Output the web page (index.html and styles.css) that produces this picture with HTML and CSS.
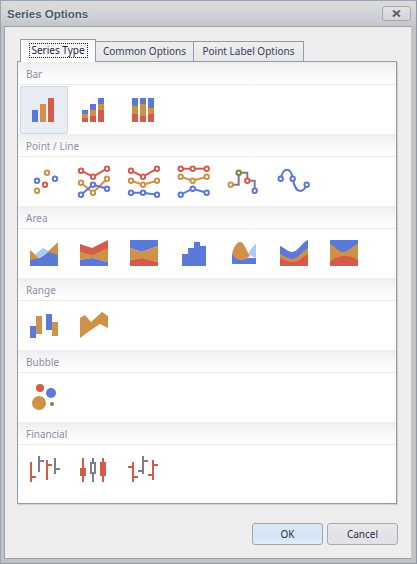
FILE: index.html
```html
<!DOCTYPE html>
<html lang="en">
<head>
<meta charset="utf-8">
<title>Series Options</title>
<link rel="stylesheet" href="styles.css">
</head>
<body>
<div class="window">
  <div class="titlebar">
    <span class="title">Series Options</span>
    <button class="close" aria-label="Close"><svg width="9" height="7" viewBox="0 0 9 7"><path class="close-x" d="M1 0.5 L8 6.5 M8 0.5 L1 6.5"/></svg></button>
  </div>
  <div class="client">
    <div class="tabs">
      <div class="tab active"><span class="focus">Series Type</span></div>
      <div class="tab common">Common Options</div>
      <div class="tab label">Point Label Options</div>
    </div>
    <div class="panel">
      <section class="group">
        <div class="group-head">Bar</div>
        <div class="row">
          <div class="cell selected"><svg viewBox="0 0 48 48"><rect class="blue" x="12" y="24" width="6" height="12"/><rect class="orange" x="20" y="18" width="6" height="18"/><rect class="red" x="28" y="12" width="6" height="24"/></svg></div>
          <div class="cell"><svg viewBox="0 0 48 48"><rect class="blue" x="12" y="24" width="6" height="4"/><rect class="orange" x="12" y="28" width="6" height="4"/><rect class="red" x="12" y="32" width="6" height="4"/><rect class="blue" x="20" y="18" width="6" height="6"/><rect class="orange" x="20" y="24" width="6" height="6"/><rect class="red" x="20" y="30" width="6" height="6"/><rect class="blue" x="28" y="12" width="6" height="6"/><rect class="orange" x="28" y="18" width="6" height="6"/><rect class="red" x="28" y="24" width="6" height="12"/></svg></div>
          <div class="cell"><svg viewBox="0 0 48 48"><rect class="blue" x="12" y="12" width="6" height="8"/><rect class="orange" x="12" y="20" width="6" height="8"/><rect class="red" x="12" y="28" width="6" height="8"/><rect class="blue" x="20" y="12" width="6" height="6"/><rect class="orange" x="20" y="18" width="6" height="12"/><rect class="red" x="20" y="30" width="6" height="6"/><rect class="blue" x="28" y="12" width="6" height="10"/><rect class="orange" x="28" y="22" width="6" height="6"/><rect class="red" x="28" y="28" width="6" height="8"/></svg></div>
        </div>
      </section>
      <section class="group">
        <div class="group-head">Point / Line</div>
        <div class="row">
          <div class="cell"><svg viewBox="0 0 48 48"><circle class="pt-blue" cx="17" cy="22.7" r="2.2"/><circle class="pt-orange" cx="27" cy="14.7" r="2.2"/><circle class="pt-blue" cx="35" cy="20.7" r="2.2"/><circle class="pt-red" cx="25" cy="26.7" r="2.2"/><circle class="pt-orange" cx="17" cy="32.7" r="2.2"/></svg></div>
          <div class="cell"><svg viewBox="0 0 48 48"><polyline class="ln-red" points="11,12.7 23,18.7 37,10.7"/><polyline class="ln-orange" points="11,24.7 23,34.7 37,20.7"/><polyline class="ln-blue" points="11,36.7 23,26.7 37,30.7"/><circle class="pt-red" cx="11" cy="12.7" r="2.2"/><circle class="pt-red" cx="23" cy="18.7" r="2.2"/><circle class="pt-red" cx="37" cy="10.7" r="2.2"/><circle class="pt-orange" cx="11" cy="24.7" r="2.2"/><circle class="pt-orange" cx="23" cy="34.7" r="2.2"/><circle class="pt-orange" cx="37" cy="20.7" r="2.2"/><circle class="pt-blue" cx="11" cy="36.7" r="2.2"/><circle class="pt-blue" cx="23" cy="26.7" r="2.2"/><circle class="pt-blue" cx="37" cy="30.7" r="2.2"/></svg></div>
          <div class="cell"><svg viewBox="0 0 48 48"><polyline class="ln-red" points="11,12.7 23,18.7 37,10.7"/><polyline class="ln-orange" points="11,22.7 23,26.7 37,22.7"/><polyline class="ln-blue" points="11,34.7 23,34.7 37,36.7"/><circle class="pt-red" cx="11" cy="12.7" r="2.2"/><circle class="pt-red" cx="23" cy="18.7" r="2.2"/><circle class="pt-red" cx="37" cy="10.7" r="2.2"/><circle class="pt-orange" cx="11" cy="22.7" r="2.2"/><circle class="pt-orange" cx="23" cy="26.7" r="2.2"/><circle class="pt-orange" cx="37" cy="22.7" r="2.2"/><circle class="pt-blue" cx="11" cy="34.7" r="2.2"/><circle class="pt-blue" cx="23" cy="34.7" r="2.2"/><circle class="pt-blue" cx="37" cy="36.7" r="2.2"/></svg></div>
          <div class="cell"><svg viewBox="0 0 48 48"><polyline class="ln-red" points="10.7,10.7 22.7,10.7 36.7,10.7"/><polyline class="ln-orange" points="10.7,18.7 22.7,22.7 36.7,18.7"/><polyline class="ln-blue" points="10.7,36.7 22.7,30.7 36.7,34.7"/><circle class="pt-red" cx="10.7" cy="10.7" r="2.2"/><circle class="pt-red" cx="22.7" cy="10.7" r="2.2"/><circle class="pt-red" cx="36.7" cy="10.7" r="2.2"/><circle class="pt-orange" cx="10.7" cy="18.7" r="2.2"/><circle class="pt-orange" cx="22.7" cy="22.7" r="2.2"/><circle class="pt-orange" cx="36.7" cy="18.7" r="2.2"/><circle class="pt-blue" cx="10.7" cy="36.7" r="2.2"/><circle class="pt-blue" cx="22.7" cy="30.7" r="2.2"/><circle class="pt-blue" cx="36.7" cy="34.7" r="2.2"/></svg></div>
          <div class="cell"><svg viewBox="0 0 48 48"><polyline class="ln-grey" points="10.7,26.7 18.7,26.7 18.7,14.7 27.3,14.7 27.3,22.7 34.7,22.7 34.7,32.7"/><circle class="pt-orange" cx="10.7" cy="26.7" r="2.2"/><circle class="pt-green" cx="18.7" cy="14.7" r="2.2"/><circle class="pt-red" cx="27.3" cy="22.7" r="2.2"/><circle class="pt-blue" cx="34.7" cy="32.7" r="2.2"/></svg></div>
          <div class="cell"><svg viewBox="0 0 48 48"><path class="ln-blue" d="M10.7 20.7 C12 14.5 14.5 11.7 17 11.7 C20 11.7 22 16 22.7 20.7 C24 28 27 33 30 33 C33 33 35.5 30 36.7 26.7"/><circle class="pt-blue" cx="10.7" cy="20.7" r="2.2"/><circle class="pt-blue" cx="22.7" cy="20.7" r="2.2"/><circle class="pt-blue" cx="36.7" cy="26.7" r="2.2"/></svg></div>
        </div>
      </section>
      <section class="group">
        <div class="group-head">Area</div>
        <div class="row">
          <div class="cell"><svg viewBox="0 0 48 48"><polygon class="orange" points="10,20 20,29 38,12 38,36 10,36"/><polygon class="sky" points="14.5,25 23,18 29,21 20,28"/><polygon class="blue" points="10,30 20,28 29,22 38,25 38,36 10,36"/></svg></div>
          <div class="cell"><svg viewBox="0 0 48 48"><polygon class="red" points="10,14 22,18 38,10 38,20 22,26 10,22"/><polygon class="orange" points="10,22 22,25 38,18 38,32 22,28 10,30"/><polygon class="blue" points="10,30 22,28 38,32 38,36 10,36"/></svg></div>
          <div class="cell"><svg viewBox="0 0 48 48"><polygon class="blue" points="10,10 38,10 38,16 22,22 10,18"/><polygon class="orange" points="10,18 22,22 38,16 38,32 22,28 10,30"/><polygon class="red" points="10,30 22,28 38,32 38,36 10,36"/></svg></div>
          <div class="cell"><svg viewBox="0 0 48 48"><path class="blue" d="M12 36 V24 H18 V18 H24 V12 H30 V16 H36 V36 Z"/></svg></div>
          <div class="cell"><svg viewBox="0 0 48 48"><path class="sky" d="M28 24 C30 20 33 16 36 14 V28 Z"/><path class="blue" d="M12 34 V24 L20 30 L28 28 L36 28 V34 Z"/><path class="orange" d="M12 24 C14 16 17 12 20 12 C24 12 26 20 30 26 C26 29 23 30 20 30 C17 30 14 27 12 24 Z"/></svg></div>
          <div class="cell"><svg viewBox="0 0 48 48"><path class="blue" d="M10 16 C15 18 18 22 22 22 C28 22 32 12 38 10 V36 H10 Z"/><path class="orange" d="M10 24 C15 26 18 29 22 29 C28 29 32 21 38 18 V36 H10 Z"/><path class="red" d="M10 28 C15 30 18 32 23 32 C29 32 33 27 38 24 V36 H10 Z"/></svg></div>
          <div class="cell"><svg viewBox="0 0 48 48"><rect class="blue" x="10" y="10" width="28" height="26"/><path class="orange" d="M10 14 C15 16 18 22 23 22 C28 22 32 16 38 14 V36 H10 Z"/><path class="red" d="M10 32 C14 28 19 26 24 26 C30 26 34 28 38 30 V36 H10 Z"/></svg></div>
        </div>
      </section>
      <section class="group">
        <div class="group-head">Range</div>
        <div class="row">
          <div class="cell"><svg viewBox="0 0 48 48"><rect class="blue" x="10" y="24" width="6" height="12"/><rect class="orange" x="16" y="14" width="6" height="18"/><rect class="blue" x="26" y="12" width="6" height="16"/><rect class="orange" x="32" y="20" width="6" height="14"/></svg></div>
          <div class="cell"><svg viewBox="0 0 48 48"><polygon class="orange" points="10,16 15,13 21,20 32,10 38,14 38,26 30,22 18,30 10,36"/></svg></div>
        </div>
      </section>
      <section class="group">
        <div class="group-head">Bubble</div>
        <div class="row">
          <div class="cell"><svg viewBox="0 0 48 48"><circle class="red" cx="20" cy="14" r="4"/><circle class="blue" cx="31" cy="19" r="5"/><circle class="orange" cx="19" cy="29" r="7"/><circle class="green" cx="32" cy="30" r="2"/></svg></div>
        </div>
      </section>
      <section class="group">
        <div class="group-head">Financial</div>
        <div class="row">
          <div class="cell"><svg viewBox="0 0 48 48"><path class="red" d="M10 16 h2 v14 h4 v2 h-4 v4 h-2 Z"/><path class="grey" d="M18 10 h2 v4 h4 v2 h-4 v10 h-2 Z"/><path class="red" d="M26 14 h2 v4 h4 v2 h-4 v14 h-2 Z"/><path class="grey" d="M34 12 h2 v10 h4 v2 h-4 v4 h-2 Z"/></svg></div>
          <div class="cell"><svg viewBox="0 0 48 48"><rect class="red" x="12" y="12" width="2" height="24"/><rect class="red" x="10" y="22" width="6" height="8"/><rect class="grey" x="22" y="12" width="2" height="24"/><rect class="grey" x="20" y="16" width="6" height="12"/><rect class="paper" x="22" y="18" width="2" height="8"/><rect class="red" x="32" y="12" width="2" height="24"/><rect class="red" x="30" y="16" width="6" height="14"/></svg></div>
          <div class="cell"><svg viewBox="0 0 48 48"><path class="red" d="M12 16 h2 v14 h4 v2 h-4 v4 h-2 V22 H8 v-2 h4 Z"/><path class="grey" d="M22 10 h2 v4 h4 v2 h-4 v12 h-2 v-2 h-4 v-2 h4 Z"/><path class="red" d="M32 14 h2 v4 h4 v2 h-4 v14 h-2 v-4 h-4 v-2 h4 Z"/></svg></div>
        </div>
      </section>
    </div>
    <div class="footer">
      <button class="btn primary">OK</button>
      <button class="btn">Cancel</button>
    </div>
  </div>
</div>
</body>
</html>
```
FILE: styles.css
```css
* { box-sizing: border-box; }
html, body { margin: 0; padding: 0; }
body {
  width: 417px;
  height: 564px;
  overflow: hidden;
  font-family: "Noto Sans", "Liberation Sans", Arial, sans-serif;
  font-size: 10px;
  color: #3c3c5c;
}
.window {
  width: 417px;
  height: 564px;
  display: flex;
  flex-direction: column;
  background: #bfc3c8;
  border: 1px solid #9aa6b6;
  border-right-color: #8f9aa8;
  border-bottom-color: #8f9aa8;
}
.titlebar {
  height: 25px;
  flex: none;
  display: flex;
  align-items: flex-start;
  justify-content: space-between;
  padding: 5px 5px 0 6px;
  background: linear-gradient(#dcdbdb 0, #d6d6d6 40%, #d0d1d6 55%, #c3c6cb 100%);
}
.title {
  font-family: "Liberation Sans", Arial, sans-serif;
  font-size: 11.5px;
  font-weight: bold;
  line-height: 16px;
  color: #4a5a68;
  text-shadow: 0 0 3px #eef2f6;
}
.close {
  width: 29px;
  height: 15px;
  padding: 0;
  display: flex;
  align-items: center;
  justify-content: center;
  border: 1px solid #a6a6a6;
  border-radius: 3px;
  background: linear-gradient(#e4e4e4, #d4d4d6);
}
.close-x {
  fill: none;
  stroke: #5b626a;
  stroke-width: 2;
}
.client {
  flex: 1;
  min-height: 0;
  margin: 0 4px 4px 3px;
  display: flex;
  flex-direction: column;
  padding: 12px 14px 13px 12px;
  background: #eeeeee;
  border: 1px solid #a0a0a0;
  border-right-color: #c9c9c9;
}
.tabs {
  display: flex;
  align-items: flex-end;
  flex: none;
  height: 23px;
  padding-left: 3px;
  margin-bottom: -1px;
  position: relative;
  z-index: 1;
}
.tab {
  height: 20px;
  line-height: 18px;
  text-align: center;
  border: 1px solid #8d9cb0;
  border-left: 0;
  border-bottom: 0;
  margin-bottom: 1px;
  background: linear-gradient(#efefef, #e6e6e6);
  white-space: nowrap;
}
.tab.active {
  width: 76px;
  height: 23px;
  margin-bottom: 0;
  border-left: 1px solid #8d9cb0;
  border-top: 1px solid #8d9cb0;
  background: linear-gradient(#f6f6f6, #fdfdfd);
  padding-top: 3px;
  color: #22223c;
}
.focus {
  display: block;
  width: 59px;
  margin: 0 auto;
  height: 15px;
  line-height: 13px;
  border: 1px dotted #222;
}
.tab.common { width: 98px; }
.tab.label { width: 110px; }
.panel {
  flex: 1;
  min-height: 0;
  background: #ffffff;
  border: 1px solid #8d9cb0;
  box-shadow: 1px 1px 1px #d4d4d4;
}
.group-head {
  height: 23px;
  padding: 5px 0 0 8px;
  line-height: 14px;
  color: #8e8ea6;
  background: linear-gradient(#eeeeee, #fafafa 60%, #ffffff);
  border-bottom: 1px solid #ececec;
}
.row {
  height: 49px;
  display: flex;
  gap: 2px;
  padding: 1px 2px 0;
}
.cell {
  width: 48px;
  height: 48px;
  flex: none;
}
.cell svg {
  display: block;
  width: 48px;
  height: 48px;
}
.selected {
  background: linear-gradient(#e7ebf3, #e9eef7);
  box-shadow: inset 0 0 0 1px #d0d7e2;
  border-radius: 2px;
}
.blue { fill: #5b79d8; }
.orange { fill: #cf9048; }
.red { fill: #d65a4a; }
.grey { fill: #7c7c8c; }
.green { fill: #6d8a3c; }
.sky { fill: #a6cdf0; }
.paper { fill: #ffffff; }
.ln-blue, .ln-orange, .ln-red, .ln-grey {
  fill: none;
  stroke-width: 2;
}
.ln-blue { stroke: #5b79d8; }
.ln-orange { stroke: #cf9048; }
.ln-red { stroke: #d65a4a; }
.ln-grey { stroke: #7c7c8c; }
.pt-blue, .pt-orange, .pt-red, .pt-green {
  fill: #ffffff;
  stroke-width: 2;
}
.pt-blue { stroke: #5b79d8; }
.pt-orange { stroke: #cf9048; }
.pt-red { stroke: #d65a4a; }
.pt-green { stroke: #6d8a3c; }
.footer {
  flex: none;
  display: flex;
  justify-content: flex-end;
  gap: 4px;
  padding: 19px 0 0 0;
  margin-right: -1px;
}
.btn {
  width: 71px;
  height: 22px;
  padding: 0;
  font: inherit;
  color: #2c2c50;
  border: 1px solid #a4abb4;
  border-radius: 3px;
  background: linear-gradient(#e9e8ec, #e4e3e8 50%, #e2e1e6);
}
.btn.primary {
  background: linear-gradient(#dbe9f6, #d3e5f5 60%, #e2eef8);
  border-color: #9aa5b0;
}
```
